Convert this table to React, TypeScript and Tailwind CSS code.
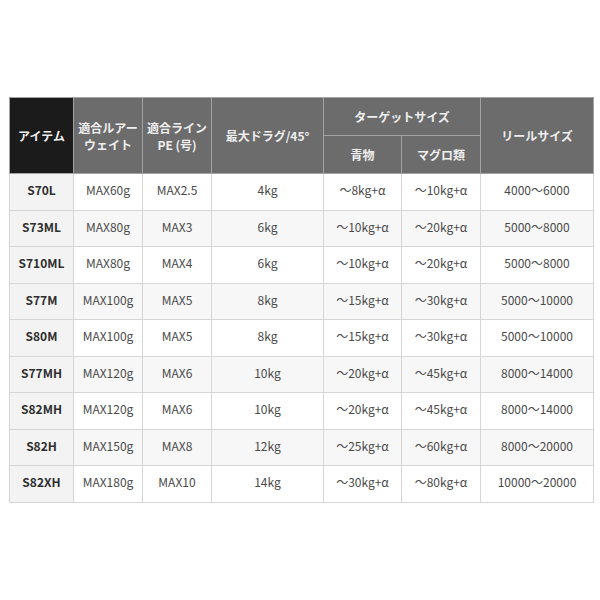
const rows = [
  ["S70L", "MAX60g", "MAX2.5", "4kg", "～8kg+α", "～10kg+α", "4000～6000"],
  ["S73ML", "MAX80g", "MAX3", "6kg", "～10kg+α", "～20kg+α", "5000～8000"],
  ["S710ML", "MAX80g", "MAX4", "6kg", "～10kg+α", "～20kg+α", "5000～8000"],
  ["S77M", "MAX100g", "MAX5", "8kg", "～15kg+α", "～30kg+α", "5000～10000"],
  ["S80M", "MAX100g", "MAX5", "8kg", "～15kg+α", "～30kg+α", "5000～10000"],
  ["S77MH", "MAX120g", "MAX6", "10kg", "～20kg+α", "～45kg+α", "8000～14000"],
  ["S82MH", "MAX120g", "MAX6", "10kg", "～20kg+α", "～45kg+α", "8000～14000"],
  ["S82H", "MAX150g", "MAX8", "12kg", "～25kg+α", "～60kg+α", "8000～20000"],
  ["S82XH", "MAX180g", "MAX10", "14kg", "～30kg+α", "～80kg+α", "10000～20000"],
];

const head = "border border-[#a3a3a3] bg-[#6c6c6c] text-[#eeeeee] font-bold text-[12px] leading-[17px] text-center align-middle";

export default function App() {
  return (
    <div className="w-[600px] h-[600px] bg-white pt-[97px] pl-[9px] font-['Noto_Sans_CJK_JP','Noto_Sans',sans-serif]">
      <table className="table-fixed border-collapse w-[584px]">
        <colgroup>
          <col className="w-[64px]" />
          <col className="w-[69px]" />
          <col className="w-[69px]" />
          <col className="w-[112px]" />
          <col className="w-[78px]" />
          <col className="w-[79px]" />
          <col className="w-[113px]" />
        </colgroup>
        <thead>
          <tr className="h-[38px]">
            <th rowSpan={2} className="border border-[#a3a3a3] bg-[#1b1b1b] text-[#eeeeee] font-bold text-[12px] text-center">アイテム</th>
            <th rowSpan={2} className={head}>適合ルアー<br />ウェイト</th>
            <th rowSpan={2} className={head}>適合ライン<br />PE (号)</th>
            <th rowSpan={2} className={head}>最大ドラグ/45°</th>
            <th colSpan={2} className={head}>ターゲットサイズ</th>
            <th rowSpan={2} className={head}>リールサイズ</th>
          </tr>
          <tr className="h-[38px]">
            <th className={head}>青物</th>
            <th className={head}>マグロ類</th>
          </tr>
        </thead>
        <tbody>
          {rows.map((r, i) => (
            <tr key={r[0]} className={`h-[36.5px] ${i % 2 === 1 ? "bg-[#f7f7f7]" : "bg-white"}`}>
              {r.map((c, j) => (
                <td
                  key={j}
                  className={
                    j === 0
                      ? "border border-[#d6d6d6] bg-[#f3f3f3] text-[#2e2e2e] font-bold text-[12px] text-center pb-[3px]"
                      : "border border-[#d6d6d6] text-[#4a4a4a] text-[12px] text-center pb-[3px]"
                  }
                >
                  {c}
                </td>
              ))}
            </tr>
          ))}
        </tbody>
      </table>
    </div>
  );
}
